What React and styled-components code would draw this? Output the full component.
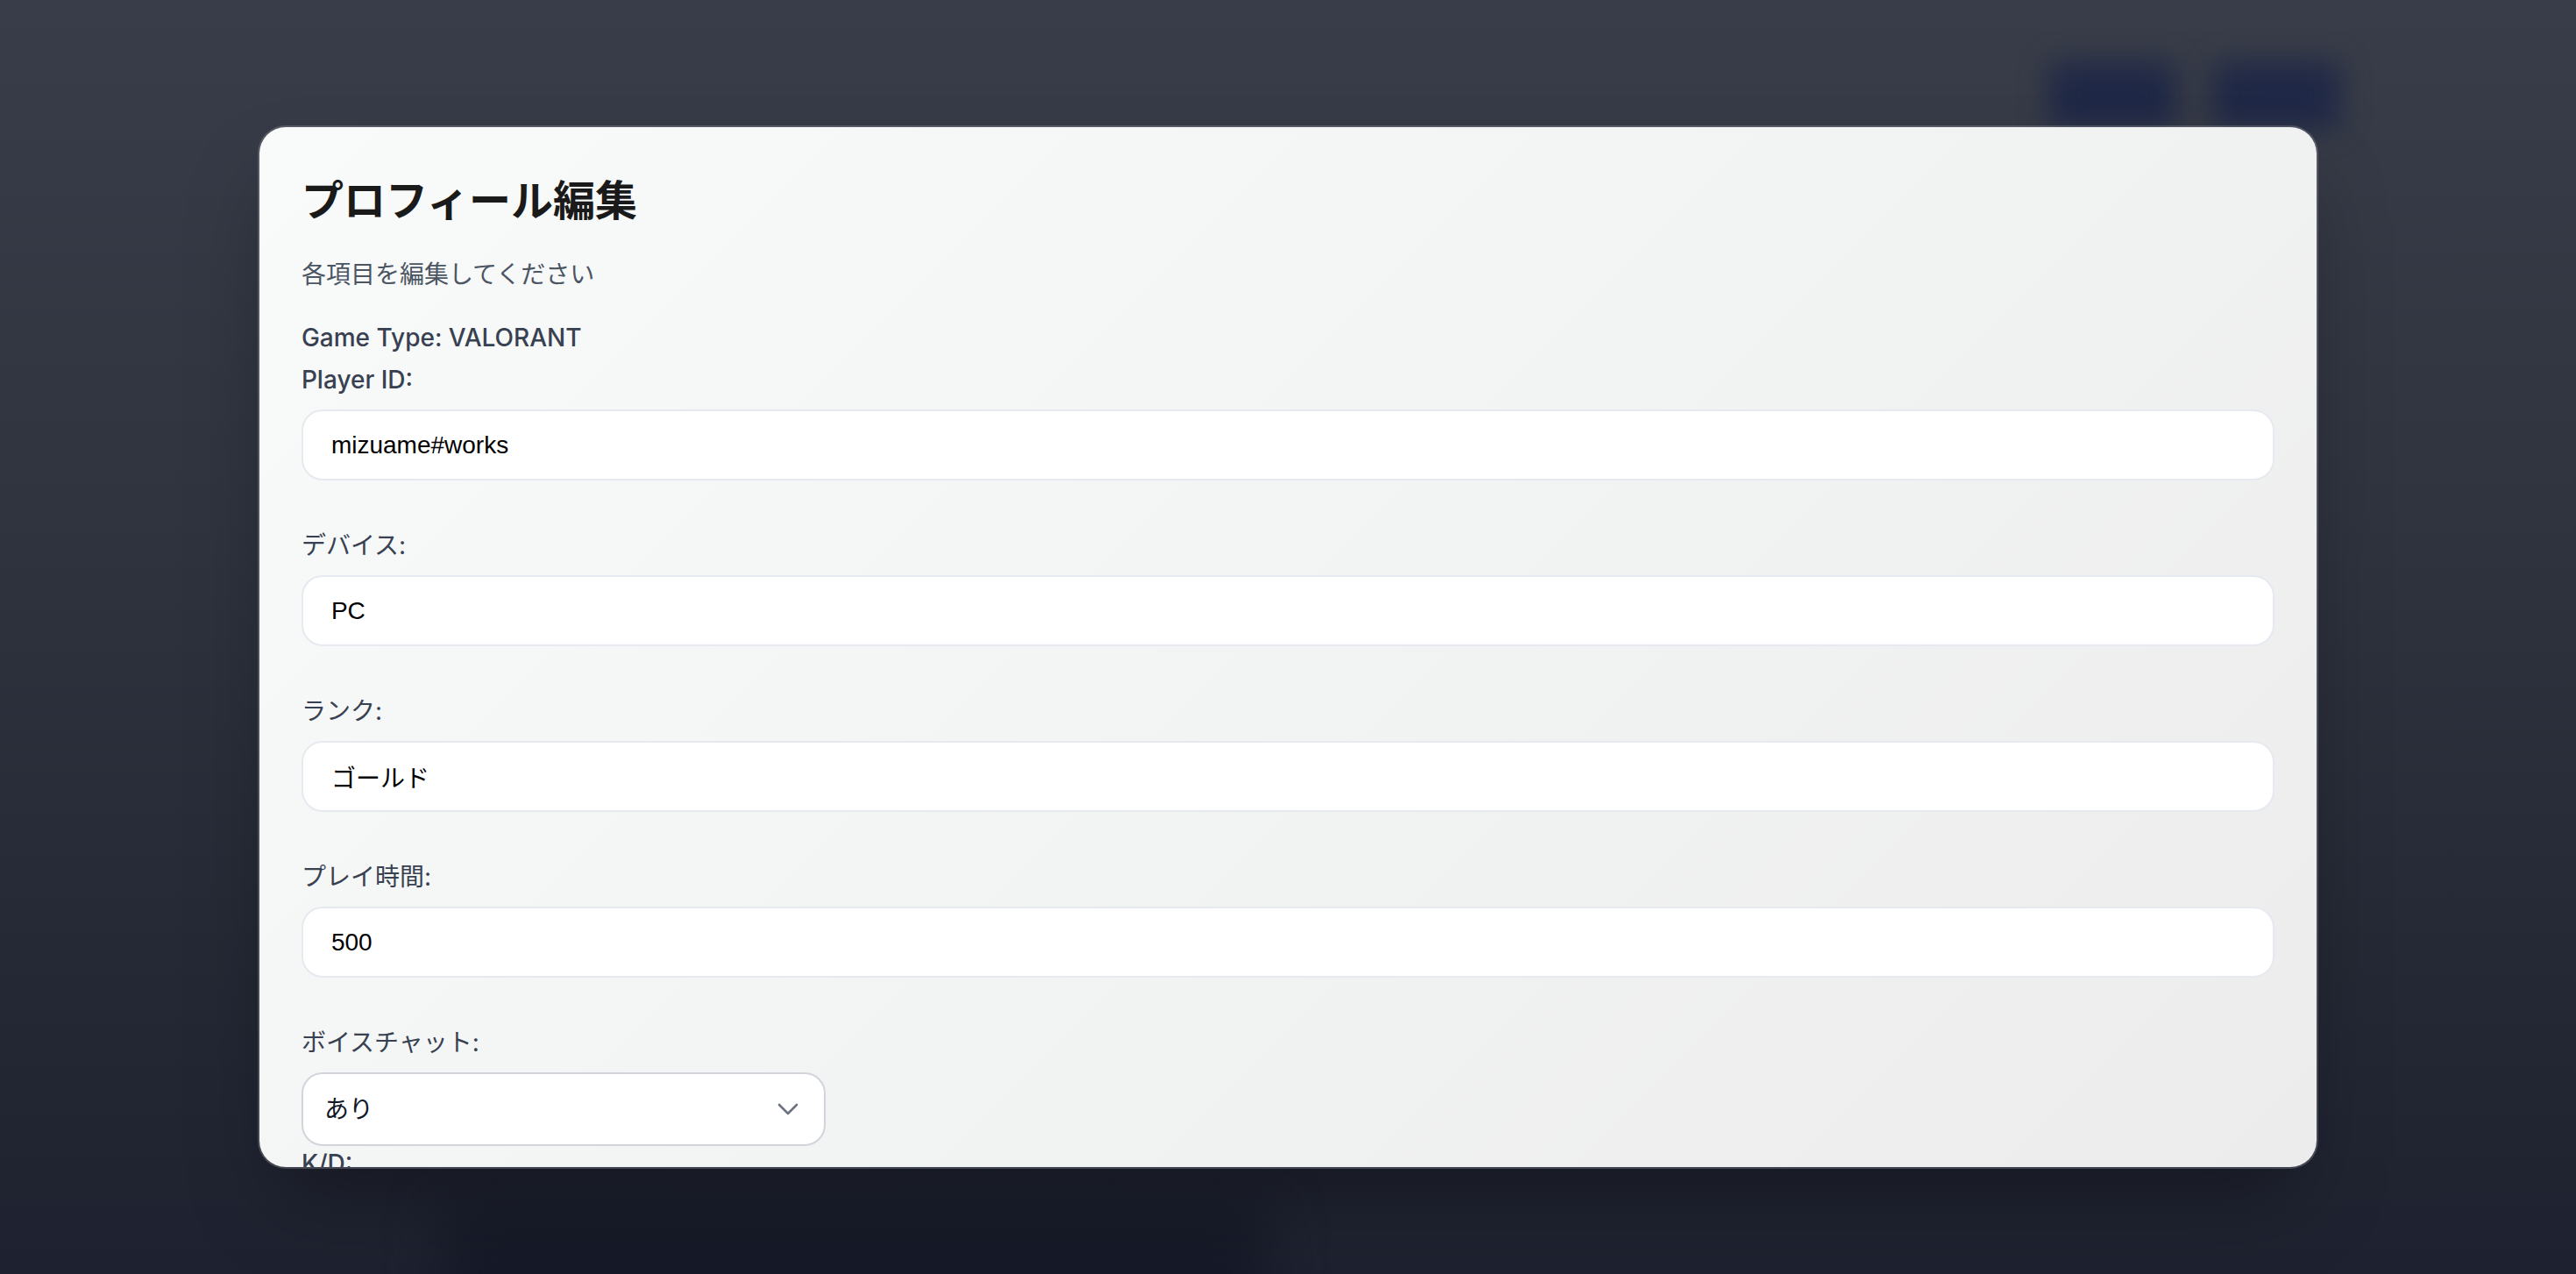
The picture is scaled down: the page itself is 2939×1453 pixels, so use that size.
import React, { useState } from 'react';
import styled, { createGlobalStyle } from 'styled-components';

const GlobalStyle = createGlobalStyle`
html, body {
  margin: 0;
  padding: 0;
  background: #2a2e3b;
}
* {
  box-sizing: border-box;
}
`;

const Page = styled.div`
position: relative;
width: 100%;
height: 100vh;
overflow: hidden;
background: linear-gradient(180deg, #393d49 0%, #30343f 40%, #252935 75%, #1e2230 100%);
`;

const Header = styled.div`
display: flex;
justify-content: flex-end;
gap: 42px;
padding: 71px 269px 0 0;
`;

const GhostButton = styled.div`
width: 145px;
height: 75px;
border-radius: 14px;
background: #1f2846;
filter: blur(16px);
`;

const GhostPanel = styled.div`
margin: 1230px 0 0 506px;
width: 940px;
height: 200px;
border-radius: 16px;
background: #161a28;
filter: blur(30px);
`;

const Overlay = styled.div`
position: absolute;
inset: 0;
display: flex;
justify-content: center;
align-items: flex-start;
padding-top: 143px;
`;

const Modal = styled.div`
width: 80%;
height: 1190px;
border-radius: 32px;
border: 2px solid rgba(255, 255, 255, 0.16);
background: linear-gradient(135deg, #f9fafa 0%, #f3f4f4 45%, #ececed 100%);
background-clip: padding-box;
box-shadow: 0 50px 100px -24px rgba(0, 0, 0, 0.35);
padding: 52px 48px;
overflow: hidden;
font-family: Inter, "Noto Sans CJK JP", sans-serif;
`;

const Title = styled.h2`
margin: 0 0 32px;
font-size: 48px;
line-height: 64px;
font-weight: 700;
color: #1a1a1a;
`;

const Subtitle = styled.p`
margin: 0 0 32px;
font-size: 28px;
line-height: 40px;
color: #4b5563;
`;

const GameType = styled.p`
margin: 0 0 8px;
font-size: 28px;
line-height: 40px;
font-weight: 500;
color: #374151;
`;

const Label = styled.label`
display: block;
margin-bottom: 14px;
font-size: 28px;
line-height: 40px;
font-weight: ${({ $jp }) => ($jp ? 400 : 500)};
color: #374151;
`;

const TextInput = styled.input`
display: block;
width: 100%;
height: 81px;
margin: 0 0 54px;
padding: 0 32px;
border: 2px solid #e6e9ef;
border-radius: 24px;
background: #ffffff;
font-family: "Liberation Sans", "Noto Sans CJK JP", sans-serif;
font-size: 28px;
color: #000000;
outline: none;
`;

const SelectWrap = styled.div`
position: relative;
width: 598px;
`;

const Select = styled.select`
display: block;
width: 100%;
height: 84px;
padding: 0 24px;
border: 2px solid #d1d5db;
border-radius: 24px;
background: #ffffff;
appearance: none;
-webkit-appearance: none;
font-family: Inter, "Noto Sans CJK JP", sans-serif;
font-size: 28px;
color: #111827;
outline: none;
`;

const Chevron = styled.svg`
position: absolute;
right: 31px;
top: 50%;
width: 24px;
height: 14px;
transform: translateY(-50%);
pointer-events: none;
`;

const fields = [
  { key: 'playerId', label: 'Player ID:', jp: false },
  { key: 'device', label: 'デバイス:', jp: true },
  { key: 'rank', label: 'ランク:', jp: true },
  { key: 'playTime', label: 'プレイ時間:', jp: true },
];

function App() {
  const [form, setForm] = useState({
    playerId: 'mizuame#works',
    device: 'PC',
    rank: 'ゴールド',
    playTime: '500',
    voice: 'あり',
    kd: '',
  });

  function update(key, value) {
    setForm({ ...form, [key]: value });
  }

  return (
    <>
      <GlobalStyle />
      <Page>
        <Header>
          <GhostButton />
          <GhostButton />
        </Header>
        <GhostPanel />
        <Overlay>
          <Modal>
            <Title>プロフィール編集</Title>
            <Subtitle>各項目を編集してください</Subtitle>
            <GameType>Game Type: VALORANT</GameType>
            {fields.map((f) => (
              <div key={f.key}>
                <Label $jp={f.jp}>{f.label}</Label>
                <TextInput
                  value={form[f.key]}
                  onChange={(e) => update(f.key, e.target.value)}
                />
              </div>
            ))}
            <Label $jp>ボイスチャット:</Label>
            <SelectWrap>
              <Select value={form.voice} onChange={(e) => update('voice', e.target.value)}>
                <option value="あり">あり</option>
                <option value="なし">なし</option>
              </Select>
              <Chevron viewBox="0 0 24 14" fill="none">
                <path d="M2 2l10 10 10-10" stroke="#6b7280" strokeWidth="2.6" strokeLinecap="round" strokeLinejoin="round" />
              </Chevron>
            </SelectWrap>
            <Label>K/D:</Label>
            <TextInput value={form.kd} onChange={(e) => update('kd', e.target.value)} />
          </Modal>
        </Overlay>
      </Page>
    </>
  );
}

export default App;
